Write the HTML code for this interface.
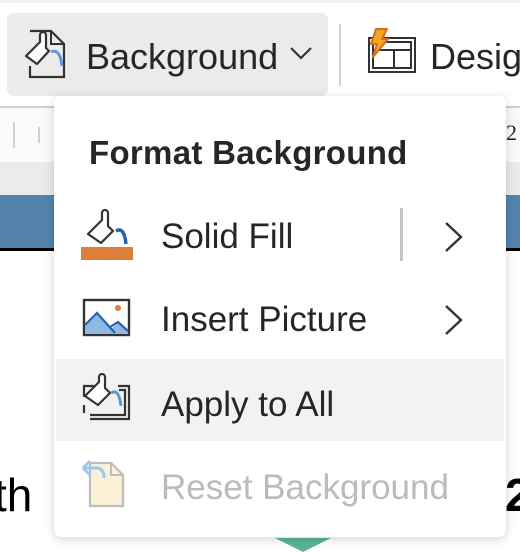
<!DOCTYPE html>
<html><head><style>
*{margin:0;padding:0;box-sizing:border-box}
body{width:520px;height:550px;overflow:hidden;background:#fff;position:relative;font-family:"Liberation Sans",sans-serif;}
.a{position:absolute}
.t{position:absolute;white-space:nowrap;color:#262626;font-size:35px;line-height:1}
</style></head><body>
<div class="a" style="left:0;top:0;width:520px;height:3px;background:#f3f3f3"></div>
<div class="a" style="left:0;top:106px;width:520px;height:2px;background:#cfcfcf"></div>
<div class="a" style="left:0;top:108px;width:520px;height:54px;background:#fafafa"></div>
<div class="a" style="left:13px;top:122px;width:2px;height:26px;background:#d0d0d0"></div>
<div class="a" style="left:38px;top:127px;width:2px;height:16px;background:#d0d0d0"></div>
<div class="t" style="left:506px;top:122px;font-size:22px;font-family:'Liberation Serif',serif">2</div>
<div class="a" style="left:0;top:162px;width:520px;height:33px;background:#ebebeb"></div>
<div class="a" style="left:0;top:195px;width:520px;height:53px;background:#5383ab"></div>
<div class="a" style="left:0;top:248px;width:520px;height:3px;background:#000"></div>
<div class="t" style="left:-6px;top:472px;font-size:46px;color:#000">th</div>
<div class="t" style="left:505px;top:472px;font-size:46px;color:#000;font-weight:bold">2</div>
<div class="a" style="left:275px;top:538px;width:0;height:0;border-left:28px solid transparent;border-right:28px solid transparent;border-top:14px solid #5bb39c"></div>

<div class="a" style="left:7px;top:13px;width:321px;height:83px;background:#ebebeb;border-radius:7px"></div>
<svg class="a" style="left:22px;top:28px" width="48" height="52" viewBox="0 0 48 52">
<path d="M8 3H29L42 16V49H8V38" fill="none" stroke="#333" stroke-width="2.2"/>
<path d="M29 3V16H42" fill="none" stroke="#333" stroke-width="2"/>
<path d="M4 28L18 14L18 7A3 3 0 0 1 24 7V20L27 23L15 36Z" fill="#fff" stroke="#333" stroke-width="2.2" stroke-linejoin="round"/>
<path d="M29 24Q38 20 40 38" fill="none" stroke="#5a9bd5" stroke-width="3"/>
</svg>
<div class="t" style="left:86px;top:39px;font-size:36px">Background</div>
<svg class="a" style="left:289px;top:45px" width="24" height="16"><path d="M2 3L12 13L22 3" fill="none" stroke="#333" stroke-width="2.2"/></svg>
<div class="a" style="left:339px;top:24px;width:2px;height:62px;background:#d0d0d0"></div>
<svg class="a" style="left:366px;top:27px" width="52" height="48" viewBox="0 0 52 48">
<rect x="3" y="11" width="46" height="34" fill="#fff" stroke="#333" stroke-width="2"/>
<rect x="7" y="15" width="38" height="26" fill="#fff" stroke="#333" stroke-width="2"/>
<path d="M7 23H45M28 23V41" stroke="#333" stroke-width="2"/>
<path d="M10 2H21L16 12H22L7 30L11 17H5Z" fill="#f5a623" stroke="#d86c1e" stroke-width="2" stroke-linejoin="round"/>
</svg>
<div class="t" style="left:430px;top:39px;font-size:36px">Design</div>

<div class="a" style="left:54px;top:96px;width:452px;height:441px;background:#fff;border-radius:7px;box-shadow:0 2px 10px rgba(0,0,0,.18)"></div>
<div class="t" style="left:89px;top:136px;font-size:33px;font-weight:bold;letter-spacing:.3px">Format Background</div>

<svg class="a" style="left:80px;top:206px" width="56" height="56" viewBox="0 0 56 56">
<path d="M8 28L22 14L22 7A3 3 0 0 1 28 7V20L33 25L21 37Z" fill="#fff" stroke="#333" stroke-width="2.2" stroke-linejoin="round"/>
<path d="M36 25Q44 20 46 38" fill="none" stroke="#2b62b0" stroke-width="3.5"/>
<rect x="1" y="41" width="52" height="13" fill="#e07f3c"/>
</svg>
<div class="t" style="left:161px;top:219px">Solid Fill</div>
<div class="a" style="left:400px;top:208px;width:3px;height:53px;background:#c8c6c4"></div>
<svg class="a" style="left:443px;top:220px" width="22" height="34"><path d="M3 3L18 17L3 31" fill="none" stroke="#333" stroke-width="2.4"/></svg>

<svg class="a" style="left:82px;top:298px" width="50" height="40" viewBox="0 0 50 40">
<rect x="2" y="2" width="45" height="35" fill="#fff" stroke="#333" stroke-width="2.4"/>
<path d="M3 36V26L15 15L30 30L36 25L46 34V36Z" fill="#8fb9e2"/>
<path d="M3 27L15 15L33 35M28 29L36 24L46 33" fill="none" stroke="#2b62b0" stroke-width="2.2"/>
<circle cx="36" cy="10" r="3" fill="#e07f3c"/>
</svg>
<div class="t" style="left:161px;top:302px">Insert Picture</div>
<svg class="a" style="left:443px;top:303px" width="22" height="34"><path d="M3 3L18 17L3 31" fill="none" stroke="#333" stroke-width="2.4"/></svg>

<div class="a" style="left:56px;top:359px;width:448px;height:82px;background:#f3f2f1"></div>
<svg class="a" style="left:82px;top:373px" width="50" height="50" viewBox="0 0 50 50">
<path d="M12 13H2V24M2 32V40" fill="none" stroke="#333" stroke-width="2.2"/>
<path d="M8 46H47V13H36M8 42H43V17H37" fill="none" stroke="#333" stroke-width="2.2"/>
<path d="M3 23L17 9L17 4A3 3 0 0 1 23 4V15L28 20L16 32Z" fill="#fff" stroke="#333" stroke-width="2.2" stroke-linejoin="round"/>
<path d="M29 20Q37 15 39 33" fill="none" stroke="#5a9bd5" stroke-width="3"/>
</svg>
<div class="t" style="left:161px;top:387px">Apply to All</div>

<svg class="a" style="left:80px;top:458px" width="48" height="52" viewBox="0 0 48 52">
<path d="M10 5H31L43 17V48H10Z" fill="#fbf1d6" stroke="#bdbdbd" stroke-width="2.2"/>
<path d="M31 5V17H43" fill="none" stroke="#bdbdbd" stroke-width="2"/>
<path d="M3 10L10 3M3 10L10 17M3 10H16Q24 10 24 20" fill="none" stroke="#9cc7ee" stroke-width="3"/>
</svg>
<div class="t" style="left:161px;top:470px;color:#bdbab7">Reset Background</div>
</body></html>
